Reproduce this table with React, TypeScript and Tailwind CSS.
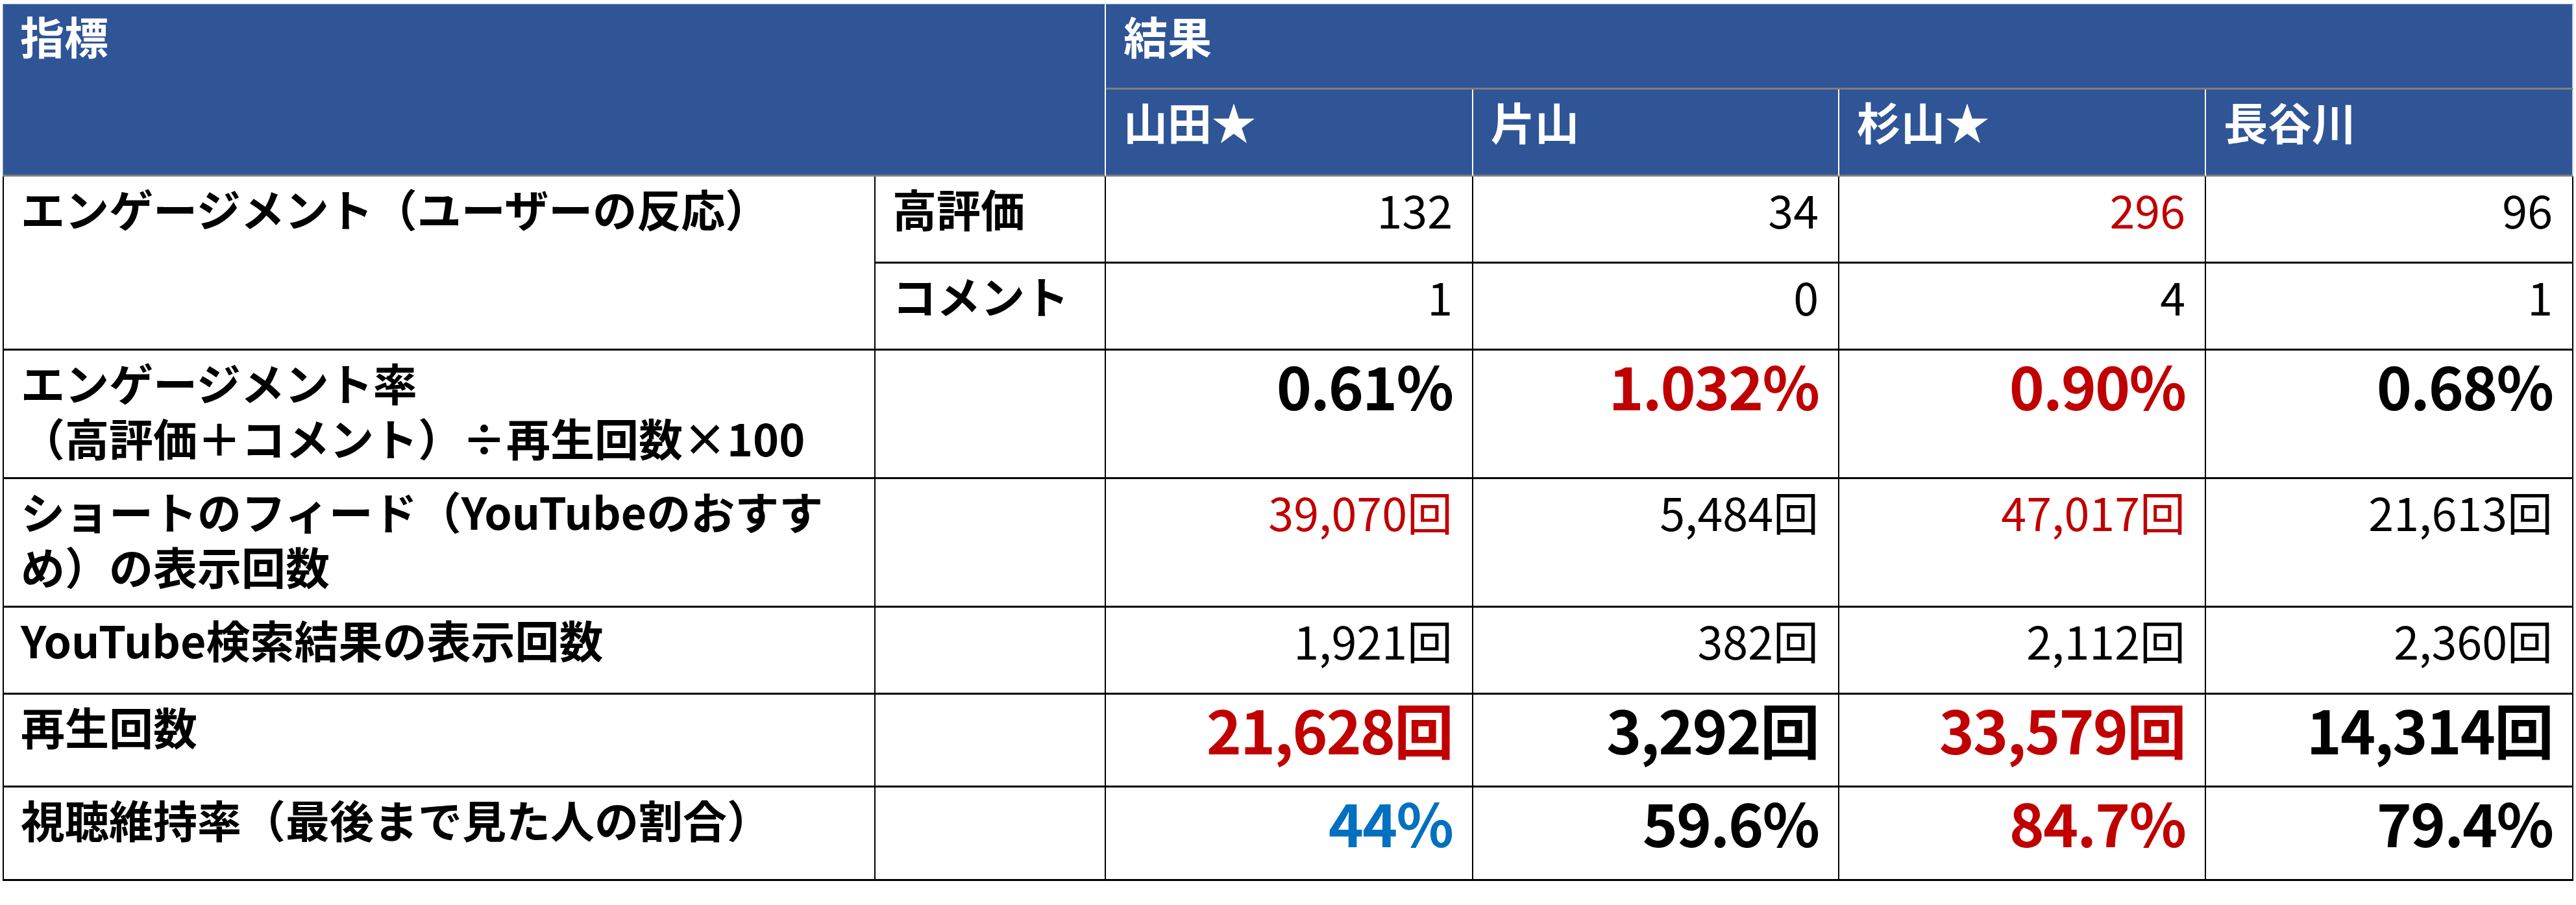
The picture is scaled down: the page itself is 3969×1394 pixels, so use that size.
import React from "react";

type V = { t: string; c?: "red" | "blue" };

const RED = "text-[#C00000]";
const BLUE = "text-[#0070C0]";
const BLACK = "text-black";

function color(c?: "red" | "blue") {
  if (c === "red") return RED;
  if (c === "blue") return BLUE;
  return BLACK;
}

const bodyCell = "border-r-2 border-b-[3px] border-black bg-white";
const labelText = "text-[68px] font-bold leading-[85px] pt-[6px] pl-[26px] text-black";
const regVal = "text-[70px] font-normal leading-[85px] pt-[7px] pr-[30px] text-right";
const bigVal = "text-[92px] font-bold leading-none tracking-[-2px] pt-[6px] pr-[30px] text-right";

function Values({ vals, big }: { vals: V[]; big?: boolean }) {
  return (
    <>
      {vals.map((v, i) => (
        <div key={i} className={`${bodyCell} ${big ? bigVal : regVal} ${color(v.c)} whitespace-nowrap`}>
          {v.t}
        </div>
      ))}
    </>
  );
}

function TwoLine({ a, b }: { a: string; b: string }) {
  return (
    <div className={`border-l-2 ${bodyCell} text-[68px] font-bold pt-[6px] pl-[26px] text-black flex flex-col`}>
      <div className="h-[85px] leading-[85px] whitespace-nowrap">{a}</div>
      <div className="h-[85px] leading-[85px] whitespace-nowrap">{b}</div>
    </div>
  );
}

export default function App() {
  return (
    <div className="min-h-screen bg-white font-['Noto_Sans_CJK_JP','Noto_Sans',sans-serif]">
      <div className="ml-[4px] pt-[6px]">
        <div className="grid w-[3961px] grid-cols-[1345px_355px_566px_564px_565px_566px] grid-rows-[132px_134px_134px_134px_198px_198px_134px_143px_144px]">
          {/* Header */}
          <div className="col-span-2 row-span-2 bg-[#2F5597] border-t border-t-[#6a86b8] border-l border-l-[#8a9bbb] border-r-2 border-r-white border-b-[3px] border-b-[#7f7f7f] text-white text-[68px] font-bold leading-[85px] pt-[5px] pl-[26px]">
            指標
          </div>
          <div className="col-span-4 bg-[#2F5597] border-t border-t-[#6a86b8] border-r-2 border-r-[#c9d2e3] border-b-[3px] border-b-[#7f7f7f] text-white text-[68px] font-bold leading-[85px] pt-[5px] pl-[27px]">
            結果
          </div>
          {["山田★", "片山", "杉山★", "長谷川"].map((n, i) => (
            <div
              key={n}
              className={`bg-[#2F5597] border-r-2 ${i === 3 ? "border-r-[#c9d2e3]" : "border-r-white"} border-b-[3px] border-b-[#7f7f7f] text-white text-[68px] font-bold leading-[85px] pt-[6px] pl-[27px]`}
            >
              {n}
            </div>
          ))}

          {/* Engagement */}
          <div className={`row-span-2 border-l-2 ${bodyCell} ${labelText}`}>エンゲージメント（ユーザーの反応）</div>
          <div className={`${bodyCell} ${labelText}`}>高評価</div>
          <Values vals={[{ t: "132" }, { t: "34" }, { t: "296", c: "red" }, { t: "96" }]} />
          <div className={`${bodyCell} ${labelText}`}>コメント</div>
          <Values vals={[{ t: "1" }, { t: "0" }, { t: "4" }, { t: "1" }]} />

          {/* Engagement rate */}
          <TwoLine a="エンゲージメント率" b="（高評価＋コメント）÷再生回数×100" />
          <div className={bodyCell}></div>
          <Values
            big
            vals={[{ t: "0.61%" }, { t: "1.032%", c: "red" }, { t: "0.90%", c: "red" }, { t: "0.68%" }]}
          />

          {/* Shorts feed */}
          <TwoLine a="ショートのフィード（YouTubeのおすす" b="め）の表示回数" />
          <div className={bodyCell}></div>
          <Values
            vals={[{ t: "39,070回", c: "red" }, { t: "5,484回" }, { t: "47,017回", c: "red" }, { t: "21,613回" }]}
          />

          {/* Search */}
          <div className={`border-l-2 ${bodyCell} ${labelText}`}>YouTube検索結果の表示回数</div>
          <div className={bodyCell}></div>
          <Values vals={[{ t: "1,921回" }, { t: "382回" }, { t: "2,112回" }, { t: "2,360回" }]} />

          {/* Plays */}
          <div className={`border-l-2 ${bodyCell} ${labelText}`}>再生回数</div>
          <div className={bodyCell}></div>
          <Values
            big
            vals={[{ t: "21,628回", c: "red" }, { t: "3,292回" }, { t: "33,579回", c: "red" }, { t: "14,314回" }]}
          />

          {/* Retention */}
          <div className={`border-l-2 ${bodyCell} ${labelText}`}>視聴維持率（最後まで見た人の割合）</div>
          <div className={bodyCell}></div>
          <Values
            big
            vals={[{ t: "44%", c: "blue" }, { t: "59.6%" }, { t: "84.7%", c: "red" }, { t: "79.4%" }]}
          />
        </div>
      </div>
    </div>
  );
}
